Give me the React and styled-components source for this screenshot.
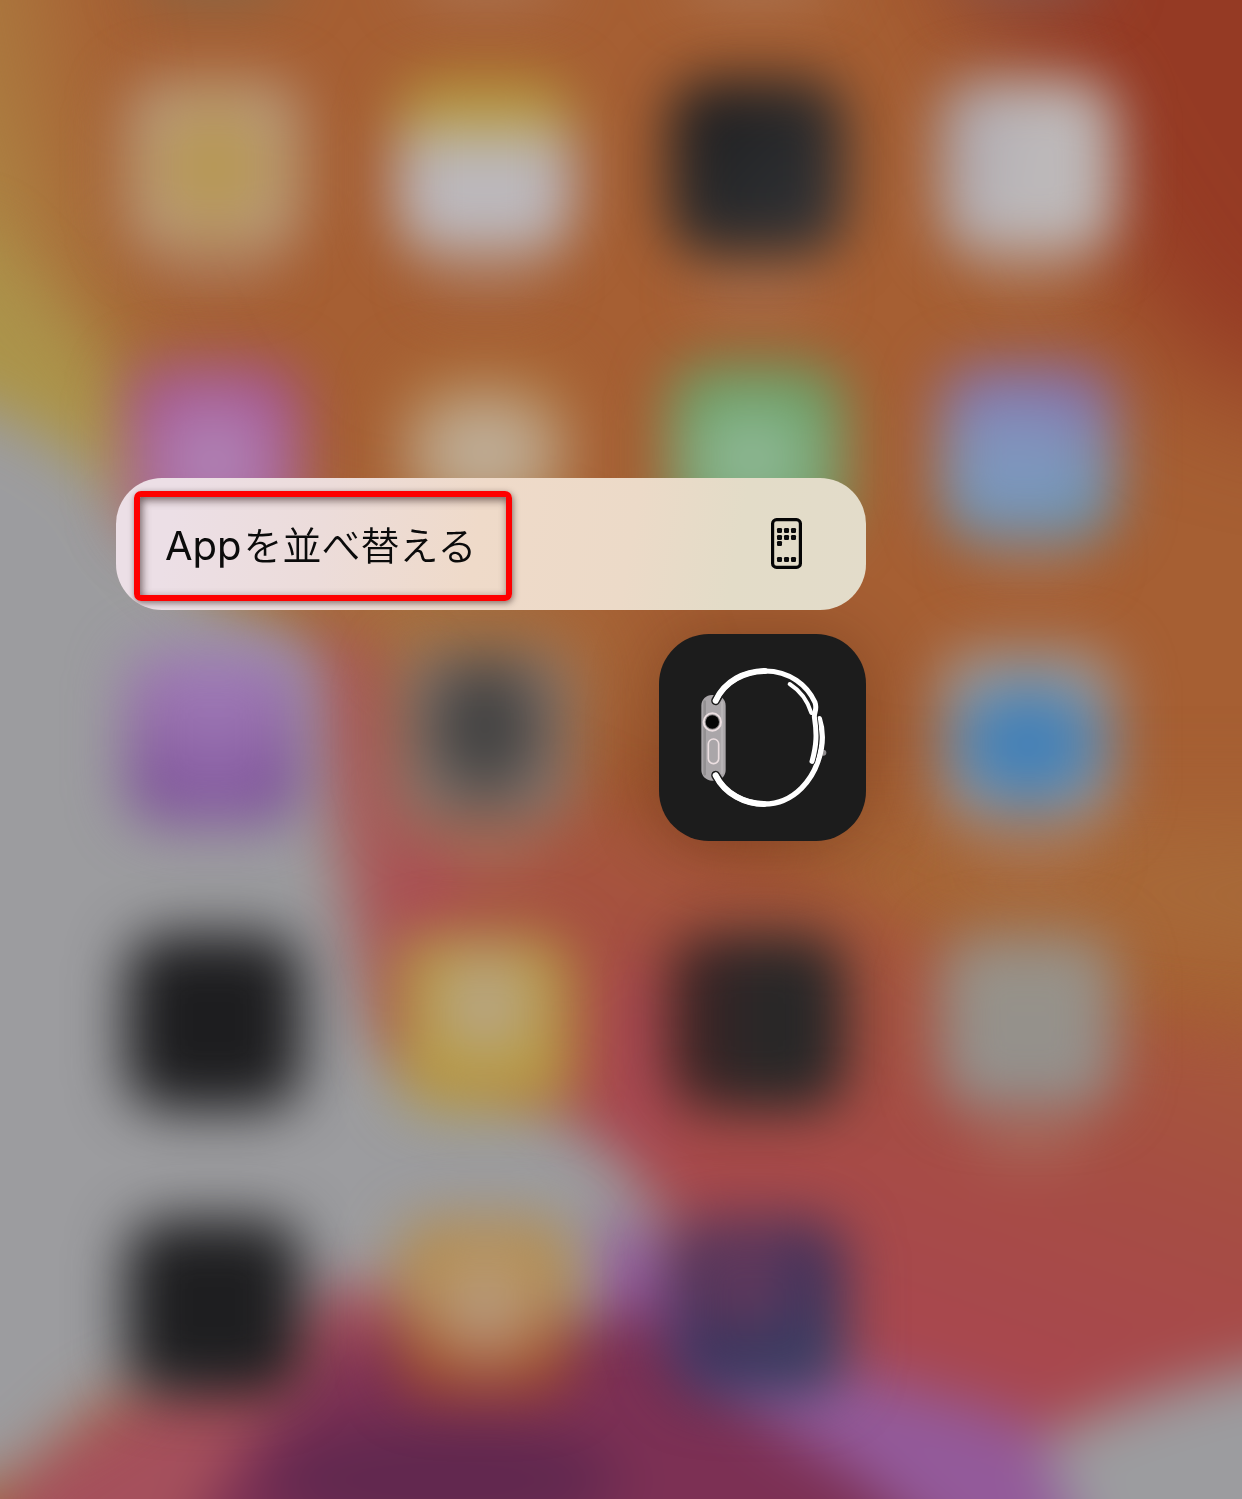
import React from "react";
import styled, { createGlobalStyle } from "styled-components";

const GlobalStyle = createGlobalStyle`
  *, *::before, *::after { box-sizing: border-box; }
  body {
    margin: 0;
    background: #a65f33;
    font-family: Inter, "Noto Sans CJK JP", "Liberation Sans", sans-serif;
  }
`;

const Screen = styled.main`
  position: relative;
  display: grid;
  grid-template-columns: minmax(0, 1fr);
  min-height: 100vh;
  overflow: hidden;
`;

const WallpaperArt = styled.svg`
  position: absolute;
  inset: 0;
  width: 100%;
  height: 100%;
`;

const HomeGrid = styled.div`
  grid-area: 1 / 1;
  position: relative;
  display: grid;
  grid-template-columns: repeat(4, minmax(0, 1fr));
  grid-auto-rows: 285px;
  padding: 24px 78px 50px;
`;

const Cell = styled.div`
  display: flex;
  align-items: center;
  justify-content: center;
`;

const Tile = styled.div`
  width: 176px;
  height: 176px;
  border-radius: 40px;
  background: ${(p) => p.$fill};
  filter: blur(28px);
`;

const FocusLayer = styled.div`
  grid-area: 1 / 1;
  position: relative;
  justify-self: start;
  display: flex;
  flex-direction: column;
  align-items: flex-end;
  gap: 24px;
  width: 750px;
  margin: 478px 0 0 116px;
`;

const Menu = styled.div`
  position: relative;
  width: 100%;
  border-radius: 46px;
  overflow: hidden;
  background: linear-gradient(100deg, #ecdfe6 8%, #ecdcda 28%, #efdac9 48%, #ecdac8 68%, #e3dcc8 82%, #e3dcca 100%);
`;

const MenuItem = styled.button`
  display: flex;
  align-items: center;
  justify-content: space-between;
  width: 100%;
  height: 132px;
  padding: 0 64px 0 49px;
  border: 0;
  background: transparent;
  color: #0b0b0b;
  font: inherit;
  font-size: 39px;
  font-weight: 350;
  line-height: 48px;
  text-align: left;
`;

const MenuLabel = styled.span`
  padding-top: 4px;
`;

const Latin = styled.span`
  font-size: 40px;
  font-weight: 400;
  margin-right: 2px;
`;

const Highlight = styled.div`
  position: absolute;
  top: 13px;
  left: 18px;
  width: 378px;
  height: 110px;
  border: 6px solid #fe0000;
  border-radius: 7px;
  box-shadow: 1px 2px 6px rgba(60, 40, 40, 0.6), inset 2px 3px 9px rgba(60, 40, 40, 0.7);
  pointer-events: none;
`;

const AppButton = styled.button`
  display: block;
  width: 207px;
  height: 207px;
  padding: 0;
  border: 0;
  border-radius: 50px;
  overflow: hidden;
  background: #1c1c1c;
  box-shadow: 0 0 70px rgba(60, 20, 0, 0.3);

  svg { display: block; width: 100%; height: 100%; }
`;

const glow = (inner, outer, at = "50% 50%", size = "50% 50%") =>
  `radial-gradient(ellipse ${size} at ${at}, ${inner}, ${outer} 100%)`;

const tiles = [
  glow("#b79850 30%", "#b89a80", "50% 50%", "46% 50%"),
  "linear-gradient(#b5983c 0 26%, #bcb8bc 34%)",
  "linear-gradient(135deg, #1a1a1d, #27282a 45%, #34363a)",
  "linear-gradient(100deg, #aaa4ad, #bdb9ba 50%)",
  glow("#b18aba 12%", "#a44f8e", "50% 56%", "58% 58%"),
  glow("#bfae98 40%", "#aa6c34", "50% 50%", "62% 46%"),
  glow("#98bc9f 10%", "#66a064", "47% 54%", "56% 46%"),
  `${glow("rgba(128,150,190,1) 20%", "rgba(127,150,188,0)", "42% 54%", "55% 55%")}, linear-gradient(#8868a8 14%, #8094b6 50%, #6298b4 90%)`,
  `${glow("rgba(158,122,184,.9)", "rgba(145,105,172,0)", "50% 20%", "38% 94%")}, linear-gradient(#a07cb4 0, #966caa 35%, #7c5098 80%, #80549a)`,
  glow("#404040 40%", "#8a7a72", "50% 44%", "44% 56%"),
  "transparent",
  glow("#4180b8 50%", "#a39c98", "50% 54%", "56% 44%"),
  "#1d1d1f",
  glow("#b8a894 18%", "#b79a40", "50% 40%", "40% 42%"),
  "linear-gradient(90deg, #3e2022, #2a2828 50%, #222526)",
  "linear-gradient(#989388, #93908e)",
  "#1e1e20",
  `${glow("#b89e84 18%", "rgba(184,154,120,0)", "50% 50%", "44% 46%")}, linear-gradient(#b58b48 40%, #a04824 84%)`,
  `${glow("rgba(120,62,94,.9)", "rgba(72,50,84,0)", "44% 36%", "42% 42%")}, linear-gradient(150deg, #4a3258, #38305a 50%, #34486a)`,
];

function Wallpaper() {
  return (
    <WallpaperArt viewBox="0 0 1242 1499" preserveAspectRatio="none" aria-hidden="true">
      <defs>
        <filter id="soft" filterUnits="userSpaceOnUse" x="-300" y="-300" width="1842" height="2100" colorInterpolationFilters="sRGB">
          <feGaussianBlur stdDeviation="28" />
        </filter>
        <filter id="haze" filterUnits="userSpaceOnUse" x="-400" y="-400" width="2042" height="2300" colorInterpolationFilters="sRGB">
          <feGaussianBlur stdDeviation="60" />
        </filter>
        <linearGradient id="rose" gradientUnits="userSpaceOnUse" x1="880" y1="1330" x2="1040" y2="900">
          <stop offset="0" stopColor="#a8474f" />
          <stop offset="0.5" stopColor="#a64d43" />
          <stop offset="1" stopColor="#a65c38" />
        </linearGradient>
      </defs>
      <rect width="1242" height="1499" fill="#a65f33" />
      <g filter="url(#haze)">
        <path d="M900 -200 H1500 V440 L1200 380 Q1040 200 900 -200Z" fill="#933622" opacity="0.9" />
        <path d="M-300 110 L-40 110 Q60 270 160 460 L330 620 L-300 620Z" fill="#ab984c" />
        <path d="M-300 -200 L10 -200 Q60 60 80 330 L-300 330Z" fill="#ad8444" opacity="0.75" />
        <path d="M220 570 L520 590 L630 700 L400 720Z" fill="#a87846" />
        <path d="M800 850 L1400 850 L1400 960 L860 900Z" fill="#a9703c" />
        <ellipse cx="700" cy="840" rx="80" ry="60" fill="#944528" />
      </g>
      <g filter="url(#soft)">
        <path d="M-200 230 L-20 230 Q60 300 115 400 L150 500 L-200 440Z" fill="#ac964c" opacity="0.6" />
        <path d="M300 600 Q400 640 460 740 Q600 790 720 860 Q880 900 1000 980 Q1120 1040 1500 1040 V1440 L930 1440 L600 1320 L330 1100Z" fill="url(#rose)" />
        <path d="M300 640 L370 640 Q400 800 460 920 L400 1010 L310 830Z" fill="#a85c5a" />
        <ellipse cx="425" cy="895" rx="36" ry="50" fill="#aa4c52" />
        <ellipse cx="640" cy="1070" rx="36" ry="110" fill="#a84852" />
        <path d="M-300 360 Q0 370 110 490 Q190 610 310 640 Q325 850 370 1000 Q390 1120 560 1120 Q620 1140 690 1260 L600 1330 L340 1300 L100 1400 L20 1470 L-300 1600Z" fill="#9c9c9f" />
        <path d="M380 1060 L470 1060 L560 1110 L560 1180 L380 1180Z" fill="#9c9c9f" />
        <path d="M-20 1600 L10 1490 Q150 1380 270 1330 Q310 1270 420 1290 L650 1400 L500 1700Z" fill="#a5505c" />
        <path d="M610 1210 Q690 1260 770 1350 Q870 1375 960 1400 Q1080 1430 1150 1530 L1150 1700 L900 1700 L590 1290Z" fill="#935a9a" />
        <path d="M120 1700 L220 1480 Q290 1390 350 1340 Q460 1310 570 1320 L670 1310 Q720 1400 850 1470 L1000 1600 L960 1700Z" fill="#7c3054" />
        <ellipse cx="440" cy="1480" rx="180" ry="60" fill="#61284f" />
        <path d="M1040 1440 Q1120 1400 1242 1370 L1500 1320 V1750 L1170 1750Z" fill="#9c9c9f" />
        <g fill="#ac8470" opacity="0.5">
          <ellipse cx="215" cy="268" rx="65" ry="20" />
          <ellipse cx="487" cy="278" rx="65" ry="20" />
          <ellipse cx="757" cy="290" rx="65" ry="20" />
          <ellipse cx="1030" cy="270" rx="65" ry="20" />
          <ellipse cx="1030" cy="555" rx="65" ry="20" />
          <ellipse cx="487" cy="850" rx="60" ry="22" />
          <ellipse cx="1030" cy="850" rx="65" ry="20" />
          <ellipse cx="1030" cy="1140" rx="60" ry="22" />
        </g>
        <g opacity="0.65">
          <ellipse cx="215" cy="-20" rx="80" ry="24" fill="#726a52" />
          <ellipse cx="487" cy="-18" rx="80" ry="24" fill="#ac8064" />
          <ellipse cx="757" cy="-18" rx="80" ry="24" fill="#ac8064" />
          <ellipse cx="1030" cy="-20" rx="80" ry="24" fill="#7c6664" />
        </g>
      </g>
    </WallpaperArt>
  );
}

function HomeScreenIcon() {
  const dots = [
    [6, 10], [13, 10], [20, 10],
    [6, 17], [13, 17], [20, 17],
    [6, 23],
    [6, 39], [13, 39], [20, 39],
  ];
  return (
    <svg width="31" height="52" viewBox="0 0 31 52" aria-hidden="true">
      <rect x="1.6" y="1.6" width="27.8" height="47.8" rx="4" fill="none" stroke="#050505" strokeWidth="3.2" />
      {dots.map(([x, y]) => (
        <rect key={`${x}-${y}`} x={x} y={y} width="5" height="5" rx="1.2" fill="#0b0b0b" />
      ))}
    </svg>
  );
}

function WatchIcon() {
  const upper = "M197 227 C225 167 285 139 345 138 C420 138 472 182 495 232 C502 252 493 260 493 275 C501 325 500 360 486 409";
  const lower = "M197 451 C225 507 285 537 342 537 C430 537 497 465 514 370 C520 335 516 305 508 281";
  const tip = "M419 177 C449 196 473 228 484 264";
  return (
    <svg viewBox="27 27 621 621" fill="none" strokeLinecap="round" aria-hidden="true">
      <rect x="154" y="210" width="73" height="257" rx="32" fill="#aaa6a9" />
      <path d="M164 230 V448" stroke="#939092" strokeWidth="8" />
      <path d="M216 232 V444" stroke="#b7b4b6" strokeWidth="7" />
      <circle cx="187" cy="291" r="26" fill="#8c898a" stroke="#ecdfe1" strokeWidth="6" />
      <circle cx="187" cy="291" r="20" fill="#050505" />
      <rect x="175" y="342" width="31" height="74" rx="15" stroke="#ecdfe1" strokeWidth="5" />
      <circle cx="520" cy="383" r="9" fill="#8f8c8e" />
      <path d="M197 227 C205 210 214 198 222 190" stroke="#1c1c1c" strokeWidth="27" />
      <path d="M197 451 C205 466 214 478 222 488" stroke="#1c1c1c" strokeWidth="27" />
      <path d={lower} stroke="#fff" strokeWidth="16" />
      <path d="M197 451 C225 507 285 537 342 537" stroke="#fff" strokeWidth="18" />
      <path d={upper} stroke="#1c1c1c" strokeWidth="20" />
      <path d={tip} stroke="#fff" strokeWidth="12" />
      <path d={upper} stroke="#fff" strokeWidth="15" />
      <path d="M197 227 C225 167 285 139 345 138" stroke="#fff" strokeWidth="18" />
    </svg>
  );
}

export default function App() {
  return (
    <>
      <GlobalStyle />
      <Screen>
        <Wallpaper />
        <HomeGrid aria-hidden="true">
          {tiles.map((fill, i) => (
            <Cell key={i}>
              <Tile $fill={fill} />
            </Cell>
          ))}
        </HomeGrid>
        <FocusLayer>
          <Menu>
            <MenuItem type="button">
              <MenuLabel lang="ja"><Latin>App</Latin>を並べ替える</MenuLabel>
              <HomeScreenIcon />
            </MenuItem>
            <Highlight />
          </Menu>
          <AppButton type="button" aria-label="Watch">
            <WatchIcon />
          </AppButton>
        </FocusLayer>
      </Screen>
    </>
  );
}
